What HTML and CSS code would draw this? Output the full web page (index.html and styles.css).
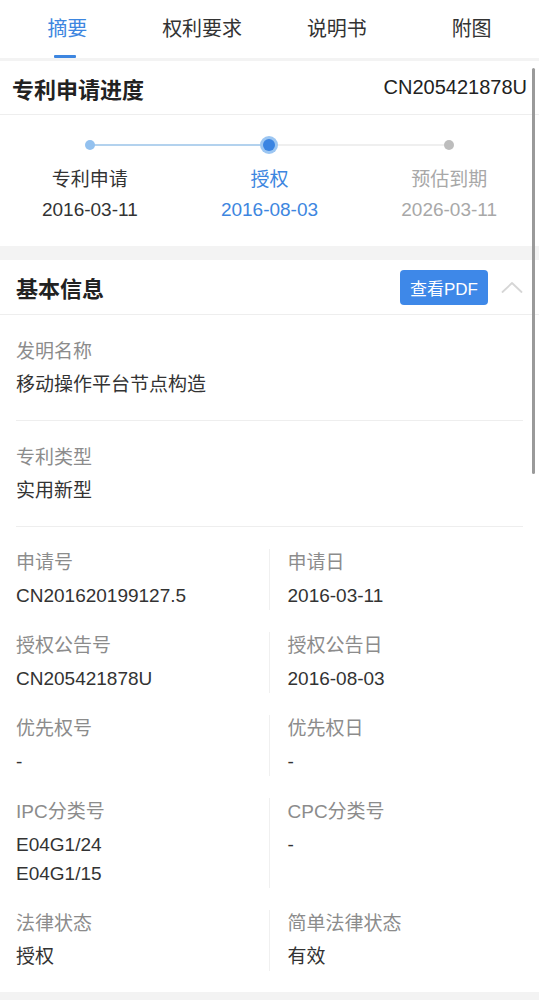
FILE: index.html
```html
<!DOCTYPE html>
<html lang="zh-CN">
<head>
<meta charset="utf-8">
<title>专利详情</title>
<link rel="stylesheet" href="styles.css">
</head>
<body>
<div class="page">
  <nav class="tabs">
    <div class="tab active">摘要</div>
    <div class="tab">权利要求</div>
    <div class="tab">说明书</div>
    <div class="tab">附图</div>
  </nav>

  <section class="card card-progress">
    <div class="card-head head-tight">
      <h2 class="card-title">专利申请进度</h2>
      <span class="pno">CN205421878U</span>
    </div>
    <div class="steps">
      <div class="step step-first">
        <div class="dot-row"><span class="dot"></span></div>
        <div class="step-name">专利申请</div>
        <div class="step-date">2016-03-11</div>
      </div>
      <div class="step step-current">
        <div class="dot-row"><span class="dot"></span></div>
        <div class="step-name">授权</div>
        <div class="step-date">2016-08-03</div>
      </div>
      <div class="step step-future">
        <div class="dot-row"><span class="dot"></span></div>
        <div class="step-name">预估到期</div>
        <div class="step-date">2026-03-11</div>
      </div>
    </div>
  </section>

  <section class="card card-basic">
    <div class="card-head">
      <h2 class="card-title">基本信息</h2>
      <div class="head-actions">
        <button class="pdf-btn">查看PDF</button>
        <svg class="chevron" width="22" height="12" viewBox="0 0 22 12"><path d="M1.5 11 L11 2 L20.5 11" fill="none" stroke="#d6d6d6" stroke-width="1.8" stroke-linecap="round" stroke-linejoin="round"/></svg>
      </div>
    </div>
    <div class="fields">
      <div class="field">
        <div class="label">发明名称</div>
        <div class="value">移动操作平台节点构造</div>
      </div>
      <div class="field">
        <div class="label">专利类型</div>
        <div class="value">实用新型</div>
      </div>
      <div class="grid">
        <div class="cell">
          <div class="label">申请号</div>
          <div class="value">CN201620199127.5</div>
        </div>
        <div class="cell">
          <div class="label">申请日</div>
          <div class="value">2016-03-11</div>
        </div>
        <div class="cell">
          <div class="label">授权公告号</div>
          <div class="value">CN205421878U</div>
        </div>
        <div class="cell">
          <div class="label">授权公告日</div>
          <div class="value">2016-08-03</div>
        </div>
        <div class="cell">
          <div class="label">优先权号</div>
          <div class="value">-</div>
        </div>
        <div class="cell">
          <div class="label">优先权日</div>
          <div class="value">-</div>
        </div>
        <div class="cell">
          <div class="label">IPC分类号</div>
          <div class="value">E04G1/24<br>E04G1/15</div>
        </div>
        <div class="cell">
          <div class="label">CPC分类号</div>
          <div class="value">-</div>
        </div>
        <div class="cell">
          <div class="label">法律状态</div>
          <div class="value">授权</div>
        </div>
        <div class="cell">
          <div class="label">简单法律状态</div>
          <div class="value">有效</div>
        </div>
      </div>
    </div>
  </section>
  <div class="scrollbar"></div>
</div>
</body>
</html>
```

FILE: styles.css
```css
* { box-sizing: border-box; }
html, body {
  margin: 0;
  padding: 0;
  background: #f3f3f3;
  font-family: "Liberation Sans", "Noto Sans CJK SC", sans-serif;
  color: #333;
}
.page {
  position: relative;
  width: 539px;
  min-height: 1000px;
  background: #f3f3f3;
}

/* tabs */
.tabs {
  display: grid;
  grid-template-columns: repeat(4, 1fr);
  height: 58px;
  background: #fff;
  margin-bottom: 3px;
}
.tab {
  position: relative;
  display: flex;
  align-items: center;
  justify-content: center;
  font-size: 20px;
  color: #333;
  padding-bottom: 3px;
}
.tab.active { color: #3d86e0; }
.tab.active::after {
  content: "";
  position: absolute;
  bottom: 0;
  left: 50%;
  width: 22px;
  margin-left: -13px;
  height: 3px;
  background: #3d86e0;
  border-radius: 1px;
}

/* cards */
.card {
  background: #fff;
}
.card-progress { margin-bottom: 14px; }
.card-head {
  display: flex;
  align-items: center;
  justify-content: space-between;
  height: 55px;
  padding: 0 16px;
  border-bottom: 1px solid #eeeeee;
}
.head-tight { padding: 0 12px; height: 54px; }
.card-title {
  margin: 0;
  font-size: 22px;
  font-weight: 600;
  color: #222;
}
.pno {
  font-size: 20px;
  color: #222;
}

/* steps */
.steps {
  display: grid;
  grid-template-columns: repeat(3, 1fr);
  padding: 22px 0 22px;
}
.step {
  display: flex;
  flex-direction: column;
  align-items: center;
}
.dot-row {
  position: relative;
  width: 100%;
  height: 16px;
  display: flex;
  align-items: center;
  justify-content: center;
  margin-bottom: 13px;
}
.dot-row::before,
.dot-row::after {
  content: "";
  position: absolute;
  top: 7px;
  height: 1.5px;
  width: 50%;
}
.dot-row::before { left: 0; }
.dot-row::after { right: 0; }
.step-first .dot-row::after { background: #b3d2ee; }
.step-current .dot-row::before { background: #b3d2ee; }
.step-current .dot-row::after { background: #efefef; }
.step-future .dot-row::before { background: #efefef; }
.dot {
  position: relative;
  z-index: 1;
  width: 10px;
  height: 10px;
  border-radius: 50%;
  background: #93c1ef;
}
.step-current .dot {
  width: 12px;
  height: 12px;
  background: #3a84e2;
  box-shadow: 0 0 0 3px #9cc6f2;
}
.step-future .dot { background: #bdbdbd; }
.step-name {
  font-size: 19px;
  line-height: 28px;
  color: #333;
}
.step-date {
  font-size: 19px;
  line-height: 28px;
  margin-top: 2px;
  color: #333;
}
.step-current .step-name,
.step-current .step-date { color: #3d86e0; }
.step-future .step-name,
.step-future .step-date { color: #a8a8a8; }

/* basic info */
.head-actions {
  display: flex;
  align-items: center;
  gap: 13px;
}
.pdf-btn {
  font-family: "Liberation Sans", "Noto Sans CJK SC", sans-serif;
  font-size: 17px;
  color: #fff;
  background: #3e88e8;
  border: none;
  border-radius: 4px;
  width: 88px;
  height: 35px;
  padding: 0;
}
.chevron { display: block; }

.fields { padding: 0 16px; }
.field {
  padding: 23px 0 21px;
  border-bottom: 1px solid #eeeeee;
}
.label {
  font-size: 19px;
  line-height: 28px;
  color: #8c8c8c;
}
.value {
  font-size: 19px;
  line-height: 29px;
  color: #333;
  margin-top: 4px;
}
.grid {
  display: grid;
  grid-template-columns: 1fr 1fr;
  row-gap: 22px;
  padding: 22px 0 21px;
}
.cell:nth-child(odd) {
  border-right: 1px solid #f0f0f0;
}
.cell:nth-child(even) {
  padding-left: 18px;
}

.scrollbar {
  position: absolute;
  left: 532px;
  top: 68px;
  width: 3px;
  height: 406px;
  border-radius: 2px;
  background: #9a9a9a;
}
```
